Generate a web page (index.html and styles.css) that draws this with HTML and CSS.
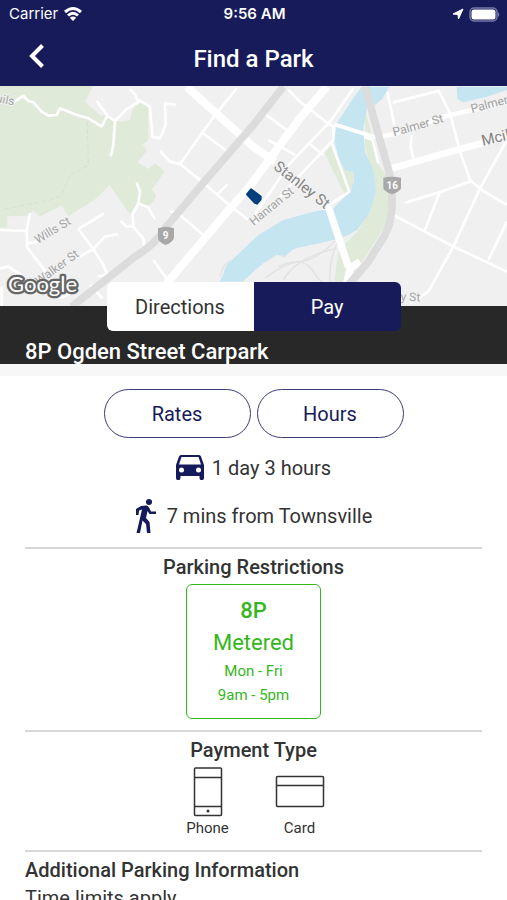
FILE: index.html
```html
<!DOCTYPE html>
<html lang="en">
<head>
  <meta charset="UTF-8">
  <meta name="viewport" content="width=device-width, initial-scale=1.0">
  <title>Find a Park</title>
  <link rel="stylesheet" href="styles.css">
</head>

<body>
  <header>
    <div class="status-bar">
      <div class="status-left">
        <span>Carrier</span>
        <svg width="20" height="16" viewBox="0 0 20 16" fill="none" stroke="#fff" stroke-width="3">
          <path d="M2 6 Q10 -1 18 6"/>
          <path d="M5 9.500 Q10 5 15 9.500"/>
          <path d="M10 15 L6.800 11.800 Q10 9 13.200 11.800 Z" fill="#fff" stroke="none"/>
        </svg>
      </div>
      <span class="status-time">9:56 AM</span>
      <div class="status-right">
        <svg width="12" height="12" viewBox="0 0 12 12" fill="#fff" stroke="#fff" stroke-linejoin="round">
          <path d="M11 1 L6.500 11 L6 6.500 L1 6 Z"/>
        </svg>
        <svg width="31" height="15" viewBox="0 0 31 15">
          <rect x="1" y="1" width="27" height="13" rx="4" fill="none" stroke="#777aa5" stroke-width="1.500"/>
          <rect x="2.500" y="2.500" width="24" height="10" rx="2.500" fill="#fff"/>
          <path d="M29 5 Q31.500 7.500 29 10 Z" fill="#777aa5"/>
        </svg>
      </div>
    </div>
    <div class="nav-bar">
      <button type="button" class="back-button" aria-label="Back">
        <svg width="16" height="24" viewBox="0 0 16 24" fill="none" stroke="#fff" stroke-width="4">
          <path d="M13.500 1.500 L3 12 L13.500 22.500"/>
        </svg>
      </button>
      <h1>Find a Park</h1>
    </div>
  </header>

  <main>
    <div class="map">
      <svg viewBox="0 3 1521 660" preserveAspectRatio="xMidYMid slice" role="img" aria-label="Map of Townsville">
        <rect x="0" y="0" width="1521" height="670" fill="#f0f0f0"/>

        <!-- parks -->
        <g fill="#dfead9">
          <path d="M0 0 H280 L255 50 L302 92 L330 90 L345 105 L365 110 L390 105 L395 80 L415 50 L445 60 V165 L428 178 L440 198 L412 232 L445 252 L465 235 L493 258 L475 288 L455 312 L468 330 L460 350 L430 370 L415 350 L390 388 L328 300 L290 340 L205 394 L185 362 L120 394 L98 374 L90 392 L22 394 V428 H0 Z"/>
          <path d="M1095 75 L1110 130 L1135 240 L1168 280 L1170 400 L1080 540 L1030 590 H1003 L1015 500 L1080 430 L1125 310 L1095 180 Z"/>
          <path d="M974 205 L994 180 L1048 320 L1035 330 Z"/>
          <path d="M994 180 L1030 250 L1060 265 L1060 300 L1045 325 Z"/>
        </g>

        <!-- river -->
        <g fill="#c5e5f1">
          <path d="M1085 5 L1060 40 L1030 85 L1010 115 L1003 170 L1018 225 L1035 255 L1060 263 L1062 290 L1050 320 L1000 370 L940 380 L850 405 L775 450 L680 540 L660 590 H728 L760 560 L790 535 L830 510 L855 515 L880 492 L1000 465 L1040 452 L1072 434 L1108 385 L1128 320 L1120 255 L1095 200 L1090 130 L1100 80 L1105 5 Z"/>
          <path d="M1100 5 H1168 L1148 40 L1126 60 L1110 50 Z"/>
          <path d="M1370 5 H1521 V15 L1460 35 L1390 52 L1372 42 Z"/>
        </g>

        <!-- small paths -->
        <g fill="none" stroke="#e2e2e2" stroke-width="4">
          <path d="M262 110 L265 240 L210 270 L185 330 L150 345 L15 372" stroke="#cfdbcb" stroke-width="2" stroke-dasharray="14 8"/>
          <path d="M795 580 Q850 535 900 530 T1005 468"/>
          <path d="M835 545 Q910 510 940 560 T1000 590"/>
          <path d="M850 585 Q890 515 1010 490"/>
          <path d="M990 590 Q985 530 1015 465"/>
          <path d="M660 575 L670 545 L692 525"/>
          <path d="M855 515 L840 510"/>
        </g>

        <!-- minor streets -->
        <g fill="none" stroke="#fff" stroke-width="8" stroke-linejoin="round">
          <path d="M40 52 L70 32 L85 48 L100 52 L125 80 L145 92 L170 90 L180 70 L230 90 L265 100 L305 124 L322 92 L290 48"/>
          <path d="M322 92 L345 108 L380 72 L415 52 L405 28 L390 12"/>
          <path d="M345 108 L340 180 L332 214"/>
          <path d="M415 45 L450 65 L457 155 L480 160 L497 120 L495 55 L528 60"/>
          <path d="M410 292 L420 320 L415 355 L398 388 L400 425 L430 460 L434 498 L405 515"/>
          <path d="M415 355 L445 368 L465 402"/>
          <path d="M362 408 L380 425 L400 425"/>
          <path d="M0 435 L80 438 L90 385"/>
          <path d="M80 438 L82 488 L130 550 L145 580"/>
          <path d="M82 475 L120 470"/>
          <path d="M312 385 L235 432 L280 492 L315 455 L355 447"/>
          <path d="M230 520 L280 492 L310 540 L322 570 L295 574"/>
          <path d="M0 550 L25 545 L70 575"/>
          <path d="M5 605 V665 M180 640 L210 625 M270 600 L308 640"/>
          <path d="M460 525 L510 595"/>
          <path d="M480 198 L510 230 L540 237 L600 285 L682 355 L745 405"/>
          <path d="M710 10 L645 90 L540 237 M605 142 L680 198"/>
          <path d="M655 325 L682 298 M510 380 L530 382 L610 450"/>
          <path d="M865 15 L900 50 L990 120 L1005 125"/>
          <path d="M1060 10 L990 110 L870 235 L760 395"/>
          <path d="M792 85 L860 135 M805 165 L885 210 M930 178 L970 210"/>
          <path d="M1000 120 L1000 165 L910 260 L760 420"/>
          <path d="M995 175 L1048 320 L980 365"/>
          <path d="M1162 20 L1183 120 M1178 53 L1315 18 M1315 15 L1350 85"/>
          <path d="M1235 150 L1232 185 L1240 220"/>
          <path d="M1350 85 L1380 200 L1410 285 L1445 315 L1521 360"/>
          <path d="M1415 288 L1310 325 L1215 353 M1318 325 L1275 435"/>
          <path d="M1521 165 L1440 310 L1360 485 L1285 620 L1230 655"/>
          <path d="M1180 390 L1365 487 L1521 560"/>
          <path d="M1465 525 L1521 410"/>
          <path d="M1092 155 L1118 165 L1135 235"/>
        </g>

        <!-- main roads -->
        <g fill="none" stroke="#fff" stroke-width="16">
          <path d="M560 5 L660 95 L760 185 L825 230" stroke-width="24"/>
          <path d="M980 5 L900 100 L810 220 L745 310 L690 370 L500 595" stroke-width="24"/>
          <path d="M985 365 L1045 545 M1040 595 L1050 550 L1080 530" stroke-width="22"/>
          <path d="M1003 118 L1130 158" stroke-width="12"/>
          <path d="M1140 155 L1180 148 L1330 95 L1521 50" stroke-width="14"/>
          <path d="M1168 252 L1370 195 L1521 155" stroke-width="20"/>
        </g>

        <!-- highways -->
        <g fill="none" stroke="#dcdcdc" stroke-width="23">
          <path d="M850 5 L760 120 L600 305 L495 430 Q470 475 405 515 L215 665"/>
          <path d="M1097 5 L1120 95 L1170 270 Q1188 390 1155 450 L1105 530 L1045 600"/>
        </g>

        <!-- highway shields -->
        <g fill="#a8a8a8">
          <path d="M474 430 Q498 420 522 430 V458 Q520 470 497 480 Q474 470 474 458 Z"/>
          <path d="M1150 278 Q1176 272 1203 278 V308 Q1203 318 1176 328 Q1150 318 1150 308 Z"/>
        </g>
        <text x="497" y="461" class="shield-text">9</text>
        <text x="1177" y="312" class="shield-text">16</text>

        <!-- selected car park -->
        <path d="M741 328 L753 313 L782 335 L782 343 L771 356 L764 353 Z" fill="#003f7d" stroke="#003f7d" stroke-width="6" stroke-linejoin="round"/>

        <!-- street names -->
        <g class="street-names">
          <text transform="translate(-14 50) rotate(12)">uils</text>
          <text transform="translate(113 477) rotate(-31)">Wills St</text>
          <text transform="translate(117 601) rotate(-36)">Walker St</text>
          <text transform="translate(761 423) rotate(-39)">Hanran St</text>
          <text transform="translate(1182 154) rotate(-16)">Palmer St</text>
          <text transform="translate(1416 84) rotate(-15)">Palmer St</text>
          <text transform="translate(1165 646) rotate(2)">lley St</text>
          <text transform="translate(818 250) rotate(38)" class="main-street">Stanley St</text>
          <text transform="translate(1448 182) rotate(-13)" class="main-street">McilwraithSt</text>
        </g>
        <text x="24" y="621" class="map-logo">Google</text>
      </svg>
      <div class="action-buttons">
        <button type="button">Directions</button>
        <button type="button" class="pay-button">Pay</button>
      </div>
    </div>
    <div class="park-name">
      <h2>8P Ogden Street Carpark</h2>
    </div>

    <div class="details">
      <div class="pill-buttons">
        <button type="button">Rates</button>
        <button type="button">Hours</button>
      </div>

      <div class="info-row">
        <svg width="28" height="26" viewBox="0 0 28 26">
          <path d="M5 0 H23 Q24.500 0 25 1.500 L28 10 V23 Q28 25 26.500 25 H25 Q23.500 25 23.500 23 V21 H4.500 V23 Q4.500 25 3 25 H1.500 Q0 25 0 23 V10 L3 1.500 Q3.500 0 5 0 Z" fill="#151a5b"/>
          <path d="M5.500 2 H22.500 L25 9.500 H3 Z" fill="#fff"/>
          <circle cx="5.500" cy="15" r="2.500" fill="#fff"/>
          <circle cx="22.500" cy="15" r="2.500" fill="#fff"/>
        </svg>
        <span>1 day 3 hours</span>
      </div>
      <div class="info-row walk-row">
        <svg width="22" height="34" viewBox="0 0 22 34">
          <circle cx="14" cy="3" r="3" fill="#151a5b"/>
          <path d="M6 7 L11 6.500 Q13 6.500 14 8.500 L16 12.500 H21 V15 H14.500 L12.500 12 L11 19 L14.500 23 L15.500 34 H12 L11 25 L7.500 21.500 L5 34 H1.500 L5.500 17 L7 10.500 L4 11.500 L3.500 16 H1 V10 Z" fill="#151a5b"/>
        </svg>
        <span>7 mins from Townsville</span>
      </div>

      <section>
        <h3>Parking Restrictions</h3>
        <div class="restriction-box">
          <strong>8P</strong>
          <span class="restriction-type">Metered</span>
          <span>Mon - Fri</span>
          <span>9am - 5pm</span>
        </div>
      </section>

      <section>
        <h3>Payment Type</h3>
        <div class="payment-types">
          <div class="payment-type">
            <svg width="50" height="50" viewBox="0 0 50 50" fill="none" stroke="#333" stroke-width="1.500">
              <rect x="11.500" y="1" width="27" height="47.500" rx="1"/>
              <path d="M11.500 10.500 H38.500 M11.500 39.500 H38.500"/>
              <circle cx="25" cy="44" r="1.500" fill="#333" stroke="none"/>
            </svg>
            <span>Phone</span>
          </div>
          <div class="payment-type">
            <svg width="50" height="50" viewBox="0 0 50 50" fill="none" stroke="#333" stroke-width="1.500">
              <rect x="1.500" y="9.500" width="47" height="30" rx="1"/>
              <path d="M1.500 18.500 H48.500"/>
            </svg>
            <span>Card</span>
          </div>
        </div>
      </section>

      <section class="additional">
        <h3>Additional Parking Information</h3>
        <p>Time limits apply</p>
      </section>
    </div>
  </main>
</body>
</html>
```
FILE: styles.css
```css
* {
  box-sizing: border-box;
}

body {
  font-family: Roboto, "Liberation Sans", sans-serif;
  background-color: #fff;
  color: #333;
  margin: 0;
  display: flex;
  flex-direction: column;
  height: 100vh;
  font-size: 20px;
  line-height: 24px;
}

h1, h2, h3, p {
  margin: 0;
}

h2, h3 {
  font-size: 20px;
  font-weight: 500;
}

svg {
  display: block;
}

button {
  font-family: inherit;
  font-size: 20px;
  cursor: pointer;
}

header {
  background-color: #171b5a;
  color: #fff;
  flex-shrink: 0;
}

.status-bar {
  display: grid;
  grid-template-columns: 1fr auto 1fr;
  align-items: center;
  height: 28px;
  padding: 0 7px 0 9px;
  font-family: Inter, sans-serif;
  font-size: 15px;
}

.status-left,
.status-right {
  display: flex;
  align-items: center;
  gap: 5px;
}

.status-right {
  justify-content: flex-end;
}

.status-time {
  font-weight: 600;
}

.nav-bar {
  display: grid;
  grid-template-columns: 48px 1fr 48px;
  height: 58px;
  padding: 0 8px;
}

.back-button {
  background: none;
  border: none;
  padding: 0 21px 6px;
}

h1 {
  font-size: 24px;
  font-weight: 500;
  text-align: center;
  line-height: 62px;
}

main {
  flex: 1;
  overflow-y: auto;
  scrollbar-width: none;
}

.map {
  position: relative;
}

.map > svg {
  width: 100%;
  height: 220px;
}

.street-names {
  font-size: 36px;
  fill: #a2a2a2;
  stroke: #f4f4f4;
  stroke-width: 5px;
  paint-order: stroke;
}

.main-street {
  font-size: 45px;
  fill: #858585;
}

.shield-text {
  font-size: 30px;
  font-weight: 700;
  fill: #fff;
  text-anchor: middle;
}

.map-logo {
  font-family: Lato, sans-serif;
  font-size: 66px;
  font-weight: 400;
  fill: #fff;
  stroke: #666;
  stroke-width: 14px;
  stroke-linejoin: round;
  paint-order: stroke;
}

/* sits over the bottom edge of the map */
.action-buttons {
  position: absolute;
  left: 0;
  right: 0;
  bottom: -25px;
  display: flex;
  justify-content: center;
}

.action-buttons button {
  width: 147px;
  height: 49px;
  border: none;
  border-radius: 6px 0 0 6px;
  background-color: #fff;
  color: #333;
}

.action-buttons .pay-button {
  border-radius: 0 6px 6px 0;
  background-color: #171b5a;
  color: #fff;
}

.park-name {
  background-color: #282828;
  color: #fff;
  padding: 34px 25px 0;
  border-bottom: 12px solid #f7f7f7;
}

.park-name h2 {
  font-size: 22px;
}

.details {
  padding: 13px 25px;
}

.pill-buttons {
  display: flex;
  justify-content: center;
  gap: 6px;
}

.pill-buttons button {
  width: 147px;
  height: 49px;
  border: 1px solid #393b79;
  border-radius: 25px;
  background-color: #fff;
  color: #171b5a;
}

.info-row {
  display: flex;
  justify-content: center;
  align-items: center;
  gap: 8px;
  height: 48px;
  margin-top: 6px;
}

.walk-row {
  gap: 10px;
  margin: 0 0 7px;
}

section {
  border-top: 2px solid #d8d8d8;
  padding: 6px 0 11px;
  text-align: center;
}

.restriction-box {
  display: flex;
  flex-direction: column;
  width: 135px;
  height: 135px;
  margin: 5px auto 0;
  padding: 10px 0;
  border: 1px solid #35b71b;
  border-radius: 6px;
  color: #35b71b;
  font-size: 15px;
}

.restriction-box strong,
.restriction-type {
  font-size: 22px;
  font-weight: 500;
  line-height: 32px;
}

.restriction-type {
  font-weight: 400;
}

.payment-types {
  display: flex;
  justify-content: center;
  gap: 42px;
  margin-top: 5px;
}

.payment-type {
  display: flex;
  flex-direction: column;
  align-items: center;
  width: 50px;
  font-size: 15px;
  line-height: 22px;
}

.additional {
  text-align: left;
}

.additional p {
  margin-top: 4px;
}
```
